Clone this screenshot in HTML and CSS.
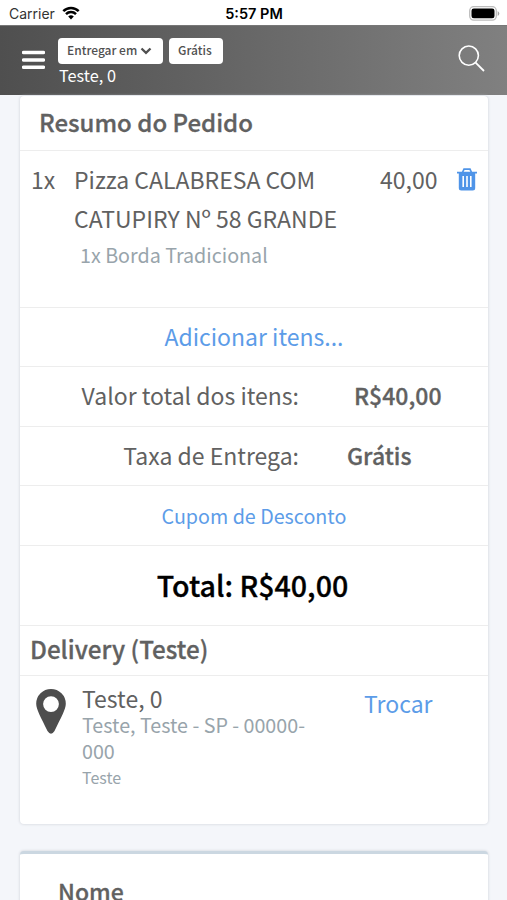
FILE: index.html
```html
<!DOCTYPE html>
<html lang="pt-BR">
<head>
<meta charset="utf-8">
<title>Resumo do Pedido</title>
<link rel="stylesheet" href="styles.css">
</head>
<body>
<div class="status">
  <div class="carrier"><span>Carrier</span>
    <svg class="wifi" viewBox="0 0 18 14" width="18" height="14"><path d="M1.3 5.2a11 11 0 0 1 15.4 0M4 8.1a7.1 7.1 0 0 1 10 0" fill="none" stroke="#000" stroke-width="2.5"/><path d="M9 13.4 6.2 10.600a4 4 0 0 1 5.600 0z"/></svg>
  </div>
  <div class="time">5:57 PM</div>
  <svg class="battery" viewBox="0 0 31 15" width="31" height="15"><rect x=".7" y=".7" width="26.600" height="13.400" rx="4" fill="#fff" stroke="#bdbdbd" stroke-width="1.300"/><rect x="2.500" y="2.500" width="23" height="9.800" rx="2.300"/><path d="M28.700 5v5q1.600-1 1.600-2.500T28.700 5z" fill="#a5a5a5"/></svg>
</div>
<header class="topbar">
  <svg class="menu" viewBox="0 0 23 20" width="23" height="20"><path d="M1.500 2.500h20M1.500 10h20M1.500 17.300h20" stroke="#fff" stroke-width="3.400" stroke-linecap="round"/></svg>
  <div class="place">
    <div class="chips">
      <button class="chip chip-main">Entregar em <svg viewBox="0 0 12 8" width="12" height="8"><path d="m1.500 1.500 4.500 4.400 4.500-4.400" fill="none" stroke="#505050" stroke-width="2.300"/></svg></button>
      <button class="chip">Grátis</button>
    </div>
    <div class="address">Teste, 0</div>
  </div>
  <svg class="search" viewBox="0 0 27 27" width="27" height="27"><circle cx="10.800" cy="10.600" r="9.600" fill="none" stroke="#fff" stroke-width="1.600"/><path d="m17.600 17.600 8.400 8.400" stroke="#fff" stroke-width="1.800"/></svg>
</header>
<main>
  <section class="card">
    <h2 class="row title">Resumo do Pedido</h2>
    <div class="row item">
      <span class="qty">1x</span>
      <div class="desc">
        <div>Pizza CALABRESA COM<br>CATUPIRY Nº 58 GRANDE</div>
        <div class="extra">1x Borda Tradicional</div>
      </div>
      <span class="price">40,00</span>
      <svg class="trash" viewBox="0 0 20 23" width="20" height="23"><path d="M5.500 4.500 7 1.200h6l1.500 3.300" fill="none" stroke="#4f94e8" stroke-width="1.700"/><path d="M0 3.800h20v1.700h-1.800V20q0 2.500-2.500 2.500H4.300Q1.800 22.500 1.800 20V5.500H0z" fill="#4f94e8"/><path d="M6.200 8v11M10 8v11M13.800 8v11" stroke="#fff" stroke-width="1.600"/></svg>
    </div>
    <div class="row add"><a>Adicionar itens...</a></div>
    <div class="row sum"><span>Valor total dos itens:</span><b>R$40,00</b></div>
    <div class="row sum fee"><span>Taxa de Entrega:</span><b>Grátis</b></div>
    <div class="row coupon"><a>Cupom de Desconto</a></div>
    <div class="row total">Total: R$40,00</div>
    <h2 class="row delivery">Delivery (Teste)</h2>
    <div class="location">
      <svg class="pin" viewBox="0 0 30 45" width="30" height="45"><path fill-rule="evenodd" d="M15 0A14.800 14.800 0 0 0 .2 14.800C.2 20.500 5 28.500 11.500 42q3.500 5.500 7 0C25 28.500 29.800 20.500 29.800 14.800A14.800 14.800 0 0 0 15 0zm0 7.200a7.900 7.900 0 1 1 0 15.800 7.900 7.900 0 0 1 0-15.800z" fill="#4d4d4d"/></svg>
      <div class="where">
        <div class="street">Teste, 0</div>
        <div class="city">Teste, Teste - SP - 00000-<br>000</div>
        <div class="note">Teste</div>
      </div>
      <a class="change">Trocar</a>
    </div>
  </section>
  <section class="card form"><label>Nome</label></section>
</main>
</body>
</html>
```
FILE: styles.css
```css
* { box-sizing: border-box; }
html { overflow: hidden; }
body {
  margin: 0;
  height: 900px;
  overflow: hidden;
  background: #f4f6fa;
  color: #616161;
  font: 400 23px/30px "Noto Sans CJK SC", "Noto Sans", sans-serif;
}
.status {
  display: grid;
  grid-template-columns: 1fr auto 1fr;
  align-items: center;
  height: 25px;
  padding: 2px 7px 0 9px;
  background: #fff;
  color: #000;
  font: 400 14px/22px Inter, sans-serif;
}
.carrier { display: flex; align-items: center; gap: 7px; color: #333; }
.wifi { margin-top: -2px; }
.time { padding-right: 1px; font-size: 14.500px; font-weight: 600; }
.battery { justify-self: end; }
.topbar {
  display: flex;
  height: 70px;
  padding: 0 22px 0 22px;
  background: linear-gradient(90deg, #4f4f4f, #808080);
  border-top: 1px solid #777;
}
.menu { margin: 24px 13px 0 0; }
.place { flex: 1; color: #fff; }
.chips { display: flex; gap: 6px; margin-top: 12px; }
.chip {
  display: flex;
  align-items: center;
  gap: 3px;
  height: 26px;
  padding: 0 11px 2px 9px;
  border: 0;
  border-radius: 4px;
  background: #fff;
  color: #505050;
  font: 500 12px/24px "Noto Sans CJK SC", sans-serif;
}
.chip-main { width: 105px; padding-right: 0; }
.chip svg { margin-top: 2px; }
.address { padding-left: 1px; font-size: 16.300px; line-height: 22px; }
.search { margin-top: 19px; }
main { padding: 1px 19px 0 20px; }
.card {
  height: 728px;
  background: #fff;
  border-radius: 4px;
  box-shadow: 0 0 3px #c9ced5;
}
.row { margin: 0; border-bottom: 1px solid #ededed; }
.title { height: 55px; padding: 11px 0 0 19px; }
.title, .delivery, label { font-size: 24px; font-weight: 500; -webkit-text-stroke: .3px; }
.item { display: flex; height: 157px; padding: 9px 11px 0 11px; line-height: 39px; }
.qty { width: 43px; }
.desc { flex: 1; }
.extra { padding-left: 6px; color: #98a4ab; font-size: 19.700px; line-height: 34px; }
.price { width: 77px; }
.trash { margin-top: 8px; }
a { color: #5c9ce8; }
.add { height: 59px; padding-top: 13px; text-align: center; }
.sum { display: flex; height: 60px; padding-top: 13px; }
.sum span { width: 279px; text-align: right; }
.sum b { margin-left: 55px; font-weight: 500; -webkit-text-stroke: .3px; }
.fee { height: 59px; padding-top: 13px; }
.fee b { margin-left: 48px; }
.coupon { height: 60px; padding-top: 15px; text-align: center; font-size: 19.700px; }
.total {
  height: 80px;
  padding: 19px 3px 0 0;
  color: #000;
  font-size: 28.600px;
  font-weight: 500;
  line-height: 40px;
  text-align: center;
  -webkit-text-stroke: .3px;
}
.delivery { height: 50px; padding: 8px 0 0 10px; font-size: 24.200px; }
.location { display: flex; padding: 9px 0 0 16px; }
.pin { margin: 4px 16px 0 0; }
.where { width: 282px; line-height: 26px; }
.city { margin-top: 1px; color: #98a4ab; font-size: 19.700px; line-height: 26px; }
.note { margin-top: 1px; color: #98a4ab; font-size: 16px; line-height: 24px; }
.change { margin-top: 3px; }
.form { height: 90px; margin-top: 27px; padding: 22px 38px; border-top: 3px solid #cbd7e1; }
label { display: block; font-size: 23px; }
```
